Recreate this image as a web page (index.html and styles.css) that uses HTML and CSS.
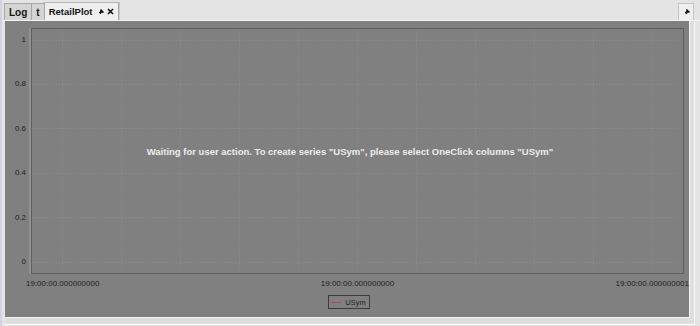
FILE: index.html
```html
<!DOCTYPE html>
<html>
<head>
<meta charset="utf-8">
<link rel="stylesheet" href="styles.css">
</head>
<body>
<div class="window">
  <div class="tabbar">
    <div class="tab">Log</div>
    <div class="tab">t</div>
    <div class="tab tab-active">RetailPlot
      <svg class="pin" width="6" height="6" viewBox="0 0 6 6"><path d="M3 0 L6 3 L5 4 L4 3.6 L2.6 5 L1.6 4.4 L0 6 L1.6 4.4 L1 3.4 L2.4 2 L2 1 Z" fill="#111"/></svg>
      <svg class="close" width="7" height="7" viewBox="0 0 7 7"><path d="M1 1 L6 6 M6 1 L1 6" stroke="#111" stroke-width="1.6"/></svg>
    </div>
    <div class="spacer"></div>
    <div class="corner-btn">
      <svg width="7" height="7" viewBox="0 0 7 7"><path d="M4 0 L7 3 L6 4 L5 3.6 L3.4 5.2 L2.4 4.6 L0 7 L2.4 4.6 L1.8 3.6 L3.4 2 L3 1 Z" fill="#111"/></svg>
    </div>
  </div>
  <div class="outer">
    <div class="panel">
      <div class="chart">
        <div class="yaxis">
          <span>1</span><span>0.8</span><span>0.6</span><span>0.4</span><span>0.2</span><span>0</span>
        </div>
        <div class="frame">
          <svg class="grid" width="651" height="244" viewBox="0 0 651 244">
            <g stroke="#8b8b8b" stroke-width="1" stroke-dasharray="1 2">
              <line x1="30.5" y1="0" x2="30.5" y2="244"/>
              <line x1="89.5" y1="0" x2="89.5" y2="244"/>
              <line x1="148.5" y1="0" x2="148.5" y2="244"/>
              <line x1="207.5" y1="0" x2="207.5" y2="244"/>
              <line x1="266.5" y1="0" x2="266.5" y2="244"/>
              <line x1="325.5" y1="0" x2="325.5" y2="244"/>
              <line x1="384.5" y1="0" x2="384.5" y2="244"/>
              <line x1="443.5" y1="0" x2="443.5" y2="244"/>
              <line x1="502.5" y1="0" x2="502.5" y2="244"/>
              <line x1="561.5" y1="0" x2="561.5" y2="244"/>
              <line x1="620.5" y1="0" x2="620.5" y2="244"/>
              <line x1="0" y1="11.5" x2="651" y2="11.5"/>
              <line x1="0" y1="55.5" x2="651" y2="55.5"/>
              <line x1="0" y1="99.5" x2="651" y2="99.5"/>
              <line x1="0" y1="144.5" x2="651" y2="144.5"/>
              <line x1="0" y1="188.5" x2="651" y2="188.5"/>
              <line x1="0" y1="233.5" x2="651" y2="233.5"/>
            </g>
          </svg>
          <div class="message">Waiting for user action. To create series "USym", please select OneClick columns "USym"</div>
        </div>
      </div>
      <div class="xaxis">
        <span>19:00:00.000000000</span><span>19:00:00.000000000</span><span>19:00:00.000000001</span>
      </div>
      <div class="legend-row">
        <div class="legend"><span class="swatch"></span>USym</div>
      </div>
    </div>
  </div>
</div>
</body>
</html>
```
FILE: styles.css
```css
html, body {
  margin: 0;
  padding: 0;
}
body {
  width: 700px;
  height: 326px;
  overflow: hidden;
  background: #e4e4e4;
  font-family: "Liberation Sans", Arial, sans-serif;
}
.window {
  box-sizing: border-box;
  width: 700px;
  height: 326px;
  border-left: 2px solid #d2d2e2;
  display: flex;
  flex-direction: column;
}
.tabbar {
  height: 20px;
  display: flex;
  align-items: flex-end;
  padding-left: 2px;
  padding-right: 6px;
  border-bottom: 1px solid #f2f2f2;
}
.tab {
  box-sizing: border-box;
  height: 17px;
  padding: 0 4px;
  display: flex;
  align-items: center;
  background: #d4d4d4;
  border: 1px solid #a8a8a8;
  border-bottom: none;
  border-right: none;
  font-size: 10px;
  font-weight: bold;
  color: #141414;
}
.tab-active {
  height: 18px;
  background: #efefef;
  border-right: 1px solid #a8a8a8;
  border-top-color: #b4b4b4;
  padding: 0 4px 0 4px;
  font-size: 9.5px;
  box-shadow: 1px 0 0 #c8c8c8;
}
.pin {
  margin-left: 6px;
}
.close {
  margin-left: 3px;
}
.spacer {
  flex: 1;
}
.corner-btn {
  box-sizing: border-box;
  width: 16px;
  height: 17px;
  background: #efefef;
  border: 1px solid #c4c4c4;
  border-bottom: none;
  display: flex;
  align-items: center;
  justify-content: center;
}
.outer {
  margin-left: 3px;
  width: 690px;
  height: 304px;
  box-sizing: border-box;
  border-right: 1px solid #fbfbfb;
  border-bottom: 1px solid #fbfbfb;
  padding: 0 2px 2px 0;
  background: #dedede;
}
.panel {
  box-sizing: border-box;
  width: 685px;
  height: 297px;
  background: #808080;
  border-right: 1px solid #f4f4f4;
  border-bottom: 1px solid #f4f4f4;
  padding-top: 7px;
  display: flex;
  flex-direction: column;
}
.chart {
  display: flex;
}
.yaxis {
  box-sizing: border-box;
  width: 26px;
  height: 246px;
  padding: 7px 5px 7px 0;
  display: flex;
  flex-direction: column;
  justify-content: space-between;
  align-items: flex-end;
  font-size: 8px;
  line-height: 10px;
  color: #222;
}
.frame {
  position: relative;
  box-sizing: border-box;
  width: 653px;
  height: 246px;
  border: 1px solid #5e5e5e;
  box-shadow: -2px 0 0 #929292;
}
.grid {
  display: block;
}
.message {
  position: absolute;
  left: 0;
  right: 15px;
  top: 50%;
  transform: translateY(-50%);
  text-align: center;
  font-size: 9.5px;
  font-weight: bold;
  color: #ececec;
  white-space: nowrap;
}
.xaxis {
  box-sizing: border-box;
  display: flex;
  justify-content: space-between;
  padding: 5px 0 0 21px;
  height: 15px;
  font-size: 8px;
  line-height: 10px;
  color: #222;
}
.legend-row {
  display: flex;
  justify-content: center;
  padding-top: 6px;
  padding-left: 4px;
}
.legend {
  box-sizing: border-box;
  height: 14px;
  padding: 0 3px 0 2px;
  border: 1px solid #3c3c3c;
  display: flex;
  align-items: center;
  font-size: 7.5px;
  color: #222;
}
.swatch {
  width: 10px;
  height: 1px;
  background: #b04848;
  margin-right: 4px;
}
```
